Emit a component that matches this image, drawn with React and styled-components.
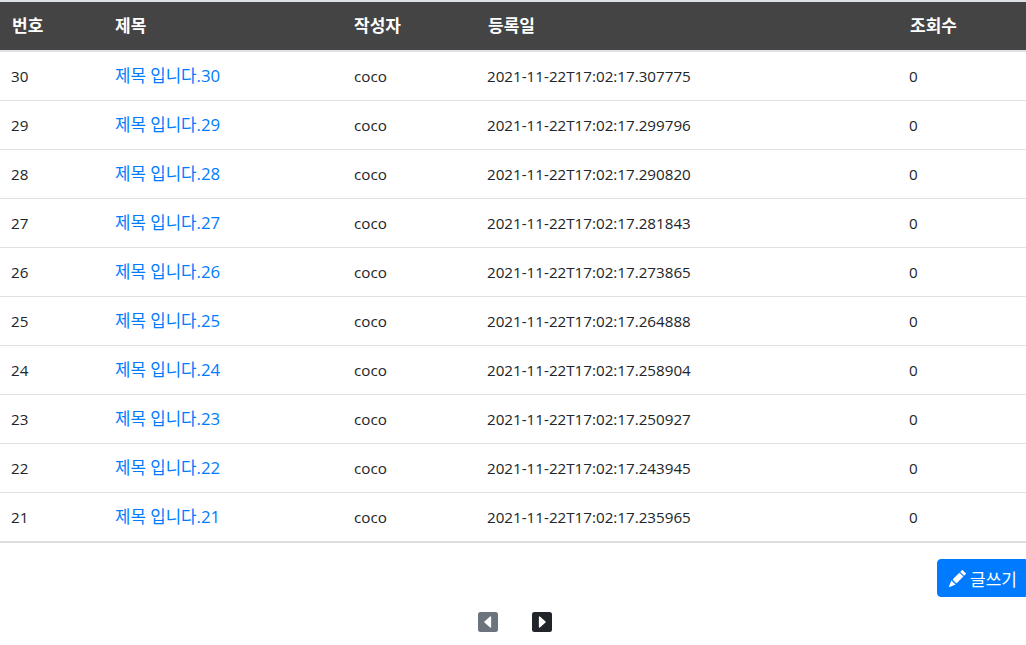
import React from "react";
import styled, { createGlobalStyle } from "styled-components";
import { BsCaretLeftSquareFill, BsCaretRightSquareFill, BsPencilFill } from "react-icons/bs";

const GlobalStyle = createGlobalStyle`
  * {
    box-sizing: border-box;
  }
  body {
    margin: 0;
    background-color: #fff;
    color: #212529;
    font-family: 'Open Sans', 'Noto Sans CJK KR', sans-serif;
    font-size: 15.2px;
    line-height: 24px;
  }
`

const Board = styled.main`
  width: 100%;
`

const Table = styled.table`
  width: 100%;
  table-layout: fixed;
  border-collapse: collapse;
  border-bottom: 2px solid #dddddd;
`

const HeadCell = styled.th`
  width: ${(props) => props.$width};
  padding: 12px;
  background-color: #444444;
  color: #fff;
  font-size: 17px;
  font-weight: 700;
  text-align: left;
  border-top: 2px solid #dee2e6;
  border-bottom: 2px solid #dee2e6;
`

const Cell = styled.td`
  padding: 12px;
  border-top: 1px solid #dee2e6;
`

const NumberCell = styled(Cell)`
  padding-left: 11px;
`

const TitleCell = styled(Cell)`
  font-size: 16.8px;
`

const TitleLink = styled.a`
  color: #007bff;
  text-decoration: none;
`

const WriteRow = styled.div`
  display: flex;
  justify-content: flex-end;
  margin-top: 16px;
`

const WriteButton = styled.button`
  display: flex;
  align-items: center;
  gap: 4px;
  height: 38px;
  padding: 0 8px 0 11px;
  border: 1px solid #007bff;
  border-radius: 4px 0 0 4px;
  background-color: #007bff;
  color: #fff;
  font-family: inherit;
  font-size: 17px;
  cursor: pointer;
`

const Pager = styled.nav`
  display: flex;
  justify-content: center;
  gap: 34px;
  margin-top: 15px;
  padding-left: 4px;
`

const PageButton = styled.a`
  display: flex;
  color: ${(props) => (props.$active ? "#212529" : "#6c757d")};
  cursor: pointer;
`

const rows = [
  [30, "307775"],
  [29, "299796"],
  [28, "290820"],
  [27, "281843"],
  [26, "273865"],
  [25, "264888"],
  [24, "258904"],
  [23, "250927"],
  [22, "243945"],
  [21, "235965"],
]

function App() {
  return (
    <Board>
      <GlobalStyle />
      <Table>
        <thead>
          <tr>
            <HeadCell $width="103px">번호</HeadCell>
            <HeadCell $width="239px">제목</HeadCell>
            <HeadCell $width="134px">작성자</HeadCell>
            <HeadCell $width="422px">등록일</HeadCell>
            <HeadCell>조회수</HeadCell>
          </tr>
        </thead>
        <tbody>
          {rows.map(([id, micro]) => (
            <tr key={id}>
              <NumberCell>{id}</NumberCell>
              <TitleCell>
                <TitleLink href="#">제목 입니다.{id}</TitleLink>
              </TitleCell>
              <Cell>coco</Cell>
              <NumberCell>2021-11-22T17:02:17.{micro}</NumberCell>
              <NumberCell>0</NumberCell>
            </tr>
          ))}
        </tbody>
      </Table>
      <WriteRow>
        <WriteButton>
          <BsPencilFill size={17} />
          글쓰기
        </WriteButton>
      </WriteRow>
      <Pager>
        <PageButton>
          <BsCaretLeftSquareFill size={20} />
        </PageButton>
        <PageButton $active>
          <BsCaretRightSquareFill size={20} />
        </PageButton>
      </Pager>
    </Board>
  );
}

export default App;
